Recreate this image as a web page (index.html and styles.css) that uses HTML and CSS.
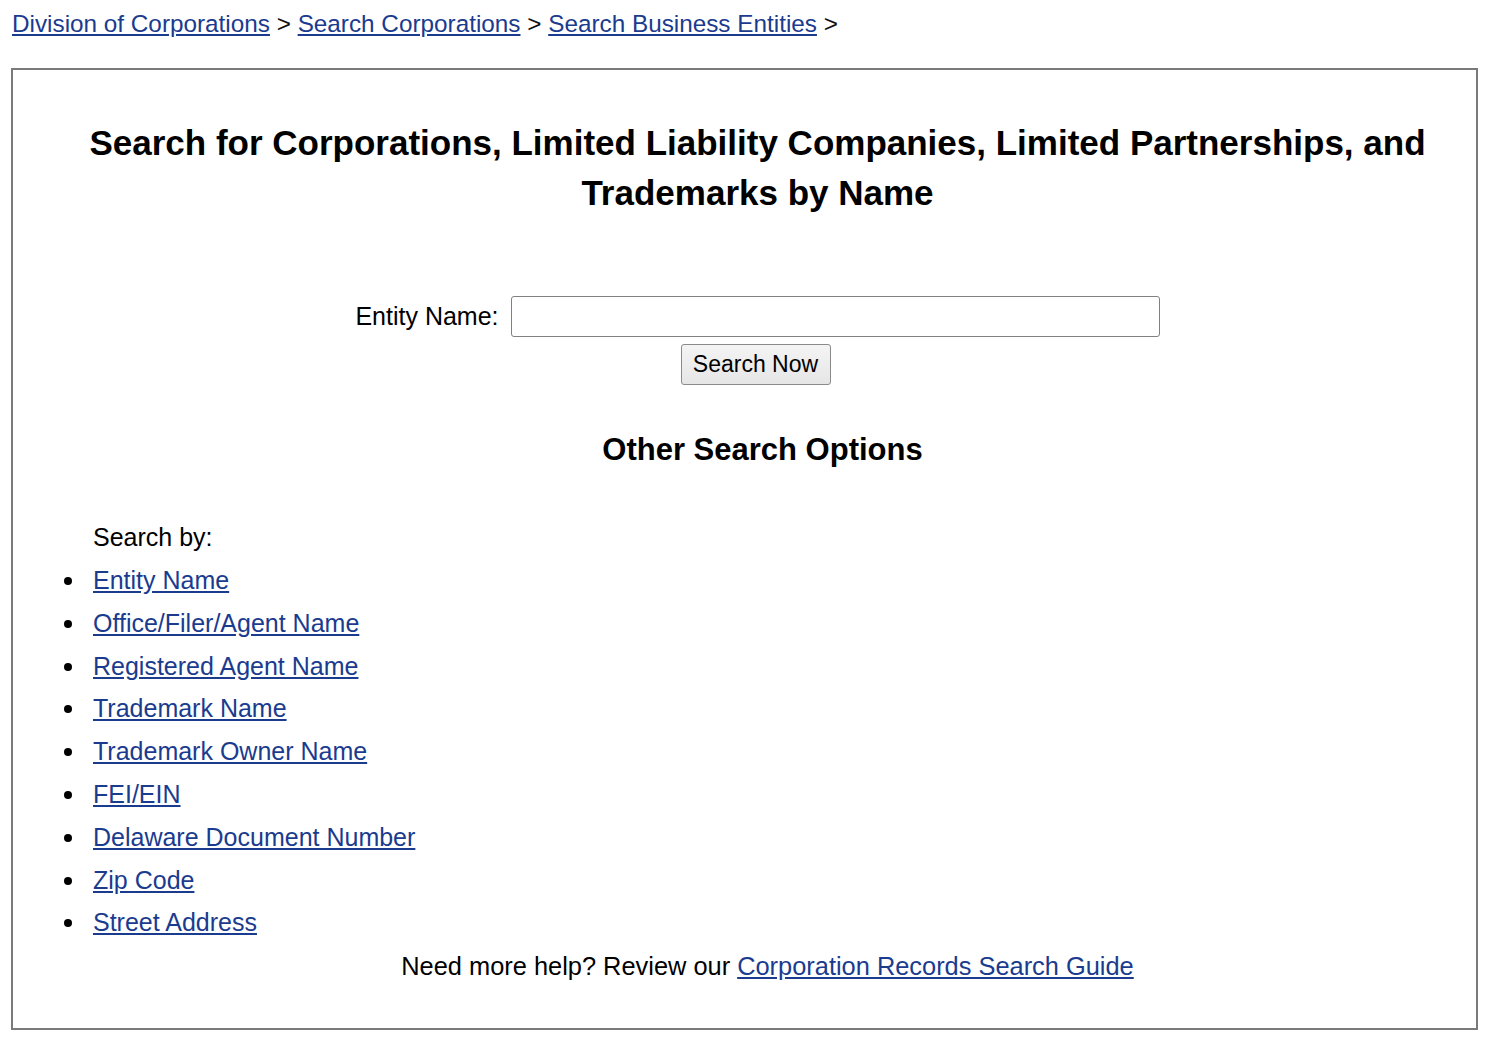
FILE: index.html
```html
<!DOCTYPE html>
<html lang="en">
<head>
<meta charset="utf-8">
<title>Search Business Entities</title>
<link rel="stylesheet" href="styles.css">
</head>
<body>
<nav class="crumbs">
  <a href="#">Division of Corporations</a> &gt; <a href="#">Search Corporations</a> &gt; <a href="#">Search Business Entities</a> &gt;
</nav>
<main class="box">
  <h1 class="title">Search for Corporations, Limited Liability Companies, Limited Partnerships, and Trademarks by Name</h1>
  <form class="search" onsubmit="return false">
    <div class="row">
      <label class="label" for="entity">Entity Name:</label>
      <input class="field" id="entity" type="text">
    </div>
    <button class="btn" type="submit">Search Now</button>
  </form>
  <h2 class="sub">Other Search Options</h2>
  <div class="by">Search by:</div>
  <ul class="opts">
    <li><a href="#">Entity Name</a></li>
    <li><a href="#">Office/Filer/Agent Name</a></li>
    <li><a href="#">Registered Agent Name</a></li>
    <li><a href="#">Trademark Name</a></li>
    <li><a href="#">Trademark Owner Name</a></li>
    <li><a href="#">FEI/EIN</a></li>
    <li><a href="#">Delaware Document Number</a></li>
    <li><a href="#">Zip Code</a></li>
    <li><a href="#">Street Address</a></li>
  </ul>
  <p class="help">Need more help? Review our <a href="#">Corporation Records Search Guide</a></p>
</main>
</body>
</html>
```
FILE: styles.css
```css
html, body {
  margin: 0;
  padding: 0;
  background: #ffffff;
}
body {
  font-family: "Liberation Sans", Arial, sans-serif;
  color: #000;
}
a {
  color: #1a3b8e;
  text-decoration: underline;
}
.crumbs {
  padding: 10px 0 0 12px;
  font-size: 24.3px;
  line-height: 28px;
  color: #111;
}
.box {
  margin: 30px 20px 0 11px;
  border: 2px solid #7a7a7a;
  padding: 0 0 40px 26px;
}
.title {
  margin: 48px 0 0;
  font-size: 35px;
  line-height: 50px;
  font-weight: bold;
  text-align: center;
}
.search {
  margin-top: 78px;
  display: flex;
  flex-direction: column;
  align-items: center;
}
.row {
  display: flex;
  align-items: center;
  gap: 12px;
}
.label {
  font-size: 25px;
}
.field {
  box-sizing: border-box;
  width: 649px;
  height: 41px;
  border: 1px solid #808080;
  border-radius: 3px;
  background: #fff;
  margin: 0;
  padding: 0 6px;
  font: 22px "Liberation Sans", Arial, sans-serif;
}
.btn {
  box-sizing: border-box;
  margin: 7px 0 0 -4px;
  width: 150px;
  height: 41px;
  border: 1px solid #8a8a8a;
  border-radius: 3px;
  background: linear-gradient(#f4f4f4, #e6e6e6);
  font: 23px "Liberation Sans", Arial, sans-serif;
  color: #000;
  padding: 0;
}
.sub {
  margin: 43px 0 0;
  padding-left: 10px;
  font-size: 31px;
  line-height: 43px;
  font-weight: bold;
  text-align: center;
}
.by {
  margin: 45px 0 0 54px;
  font-size: 25px;
  line-height: 43px;
}
.opts {
  margin: 0;
  padding-left: 54px;
  list-style: none;
  font-size: 25px;
  line-height: 42.8px;
}
.opts li {
  position: relative;
}
.opts li::before {
  content: "";
  position: absolute;
  left: -29px;
  top: 18px;
  width: 8px;
  height: 8px;
  border-radius: 50%;
  background: #000;
}
.help {
  margin: 0;
  padding-left: 20px;
  font-size: 25.4px;
  line-height: 44px;
  text-align: center;
}
```
